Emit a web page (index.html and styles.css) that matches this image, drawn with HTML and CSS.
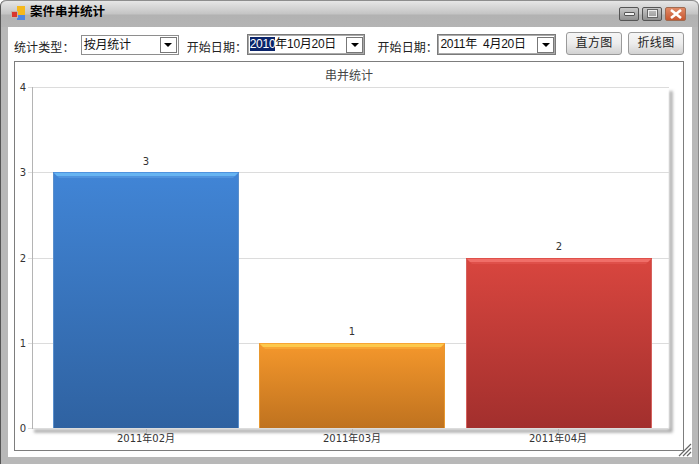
FILE: index.html
```html
<!DOCTYPE html>
<html lang="zh">
<head>
<meta charset="utf-8">
<title>案件串并统计</title>
<link rel="stylesheet" href="styles.css">
</head>
<body>
<div class="window">
  <header class="titlebar">
    <svg class="app-icon" width="15" height="15" viewBox="0 0 15 15">
      <rect x="6" y="0" width="8" height="9" fill="#f5b81c"/>
      <rect x="6" y="9" width="8" height="5" fill="#4f86e0"/>
      <rect x="0.500" y="5.500" width="6" height="6" fill="#d9372e" stroke="#c4b4ac" stroke-width="1"/>
    </svg>
    <span class="title">案件串并统计</span>
    <div class="caption">
      <span class="cap-btn"><i class="min-glyph"></i></span>
      <span class="cap-btn"><i class="max-glyph"></i></span>
      <span class="cap-btn close"><svg width="16" height="10" viewBox="0 0 16 10"><path d="M3 1 L13 9 M13 1 L3 9" stroke="#fff" stroke-width="2.6"/></svg></span>
    </div>
  </header>
  <main class="client">
    <div class="toolbar">
      <span class="label first">统计类型：</span>
      <div class="combo type"><span class="value">按月统计</span><span class="arrow"></span></div>
      <span class="label second">开始日期：</span>
      <div class="combo date"><span class="value"><span class="sel">2010</span>年10月20日</span><span class="arrow"></span></div>
      <span class="label third">开始日期：</span>
      <div class="combo date"><span class="value">2011年&nbsp; 4月20日</span><span class="arrow"></span></div>
      <button class="btn one">直方图</button>
      <button class="btn two">折线图</button>
    </div>
    <section class="group">
      <svg class="chart" width="668" height="387" viewBox="0 0 668 387">
        <defs>
          <linearGradient id="blue" x1="0" y1="0" x2="0" y2="1"><stop offset="0" stop-color="#4185d6"/><stop offset="1" stop-color="#2f62a1"/></linearGradient>
          <linearGradient id="orange" x1="0" y1="0" x2="0" y2="1"><stop offset="0" stop-color="#f5982c"/><stop offset="1" stop-color="#bf721f"/></linearGradient>
          <linearGradient id="red" x1="0" y1="0" x2="0" y2="1"><stop offset="0" stop-color="#d9463f"/><stop offset="1" stop-color="#a22f2d"/></linearGradient>
          <filter id="soft" x="-5%" y="-5%" width="110%" height="110%"><feGaussianBlur stdDeviation="1.5"/></filter>
        </defs>
        <text class="chart-title" x="334" y="18">串并统计</text>
        <path d="M19 369 H656 V29" fill="none" stroke="#a0a0a0" stroke-width="3" filter="url(#soft)"/>
        <rect x="17.500" y="25.500" width="636" height="341" fill="#fff"/>
        <path class="grid" d="M13 25.500 H654 M13 110.500 H654 M13 196.500 H654 M13 281.500 H654 M13 366.500 H654"/>
        <path class="axis" d="M17.500 25 V367"/>
        <path class="axis" d="M131.500 367 V373 M337.500 367 V373 M543.500 367 V373"/>
        <text class="tick" x="8" y="29">4</text>
        <text class="tick" x="8" y="114">3</text>
        <text class="tick" x="8" y="200">2</text>
        <text class="tick" x="8" y="285">1</text>
        <text class="tick" x="8" y="370">0</text>

        <rect x="38" y="110" width="186" height="256" fill="url(#blue)"/>
        <path d="M38 110 H224 L218 116 H44 Z" fill="#4f93de"/>
        <path d="M39 111 H223 L220 114 H42 Z" fill="#66b4f2"/>
        <path d="M38.500 111 V366 M223.500 111 V366" stroke="#5a8fcc" fill="none"/>
        <rect x="244" y="281" width="186" height="85" fill="url(#orange)"/>
        <path d="M244 281 H430 L424 287 H250 Z" fill="#f8a535"/>
        <path d="M245 282 H429 L426 285 H248 Z" fill="#fdc94c"/>
        <path d="M244.500 282 V366 M429.500 282 V366" stroke="#e8982f" fill="none"/>
        <rect x="451" y="196" width="186" height="170" fill="url(#red)"/>
        <path d="M451 196 H637 L631 202 H457 Z" fill="#df504a"/>
        <path d="M452 197 H636 L633 200 H455 Z" fill="#f06e68"/>
        <path d="M451.500 197 V366 M636.500 197 V366" stroke="#d5615d" fill="none"/>

        <text class="val" x="131" y="103">3</text>
        <text class="val" x="337" y="273">1</text>
        <text class="val" x="544" y="188">2</text>
        <text class="cat" x="131" y="380">2011年02月</text>
        <text class="cat" x="337" y="380">2011年03月</text>
        <text class="cat" x="543" y="380">2011年04月</text>
      </svg>
    </section>
    <svg class="grip" width="14" height="14" viewBox="0 0 14 14"><path d="M13 1 L1 13 M13 5 L5 13 M13 9 L9 13" stroke="#666" stroke-width="1.2"/></svg>
  </main>
</div>
</body>
</html>
```
FILE: styles.css
```css
* { box-sizing: border-box; }
html, body { margin: 0; padding: 0; }
body {
  width: 699px;
  height: 464px;
  overflow: hidden;
  font-family: "Liberation Sans", "Noto Sans CJK SC", sans-serif;
  font-size: 12px;
  color: #222;
}
.window {
  width: 699px;
  height: 464px;
  background: #b8b8b8;
  display: flex;
  flex-direction: column;
  padding: 0 6px 7px 7px;
  border-radius: 6px 6px 0 0;
  border-left: 1px solid #555;
  border-right: 1px solid #888;
}
.titlebar {
  height: 27px;
  flex: none;
  margin: 0 -6px 0 -7px;
  padding: 0 12px 4px 10px;
  display: flex;
  align-items: center;
  background: linear-gradient(#e6e6e6 0, #c4c4c4 13px, #b2b2b2 14px, #b4b4b4 100%);
  border-top: 1px solid #8d8d8d;
  border-radius: 6px 6px 0 0;
}
.app-icon { flex: none; margin-top: 2px; margin-right: 4px; }
.title { font-weight: 700; font-size: 12.500px; color: #000; margin-top: -3px; }
.caption { margin-left: auto; display: flex; gap: 3px; margin-top: 3px; }
.cap-btn {
  width: 20px;
  height: 14px;
  border: 1px solid #555;
  border-radius: 2px;
  background: linear-gradient(#c8c8c8, #8f8f8f);
  display: flex;
  align-items: center;
  justify-content: center;
}
.cap-btn.close { background: linear-gradient(#e08a66, #c9562f); width: 21px; border-color: #a06a50; }
.min-glyph { width: 11px; height: 4px; background: #f2f2f2; border: 1px solid #555; border-radius: 1px; }
.max-glyph { width: 11px; height: 9px; border: 2px solid #eee; outline: 1px solid #666; outline-offset: -1px; }
.client {
  flex: 1;
  background: #fff;
  display: flex;
  flex-direction: column;
  padding: 5px 8px 6px 6px;
  position: relative;
}
.toolbar { height: 29px; flex: none; display: flex; align-items: flex-start; }
.label {
  font-family: "Liberation Sans", "Noto Sans CJK TC", sans-serif;
  font-size: 12px;
  white-space: nowrap;
  margin-top: 6px;
  color: #222;
  letter-spacing: 0.1px;
}
.label.first { width: 67px; }
.label.second { width: 60px; margin-left: 8px; }
.label.third { width: 60px; margin-left: 12px; }
.combo {
  height: 20px;
  margin-top: 3px;
  border: 1px solid #8e8e8e;
  background: #fff;
  display: flex;
  align-items: center;
  justify-content: space-between;
  padding: 1px;
}
.combo.type { width: 98px; }
.combo.date { width: 119px; height: 21px; margin-top: 2px; border-color: #7a7a7a; outline: 1px solid #aaa; outline-offset: -2px; }
.value { padding-left: 1px; font-size: 12px; white-space: nowrap; color: #111; margin-top: -4px; letter-spacing: -0.27px; }
.sel { background: #0a246a; color: #fff; }
.arrow {
  width: 17px;
  height: 16px;
  border: 1px solid #777;
  background: #fff;
  display: flex;
  align-items: center;
  justify-content: center;
  flex: none;
}
.arrow::after {
  content: "";
  border-left: 4px solid transparent;
  border-right: 4px solid transparent;
  border-top: 4px solid #000;
}
.btn {
  width: 56px;
  height: 23px;
  padding: 0 0 5px;
  border: 1px solid #9a9a9a;
  border-radius: 3px;
  background: linear-gradient(#f6f6f6, #ececec 50%, #d2d2d2);
  font: 12px "Liberation Sans", "Noto Sans CJK SC", sans-serif;
  letter-spacing: 0.4px;
  color: #222;
}
.btn.one { margin-left: 10px; }
.btn.two { margin-left: 6px; }
.group {
  flex: 1;
  border: 1px solid #7d7d7d;
  background: #fff;
  min-height: 0;
}
.chart { display: block; }
.chart text { font-family: "DejaVu Sans", "Noto Sans CJK SC", sans-serif; text-anchor: middle; fill: #333; }
.chart .chart-title { font-family: "Liberation Sans", "Noto Sans CJK SC", sans-serif; font-size: 12px; fill: #444; }
.tick { font-size: 10px; }
.val { font-size: 10px; }
.cat { font-size: 10px; }
.grid { stroke: #dcdcdc; fill: none; }
.axis { stroke: #b4b4b4; fill: none; }
.grip { position: absolute; right: 0; bottom: 0; }
```
